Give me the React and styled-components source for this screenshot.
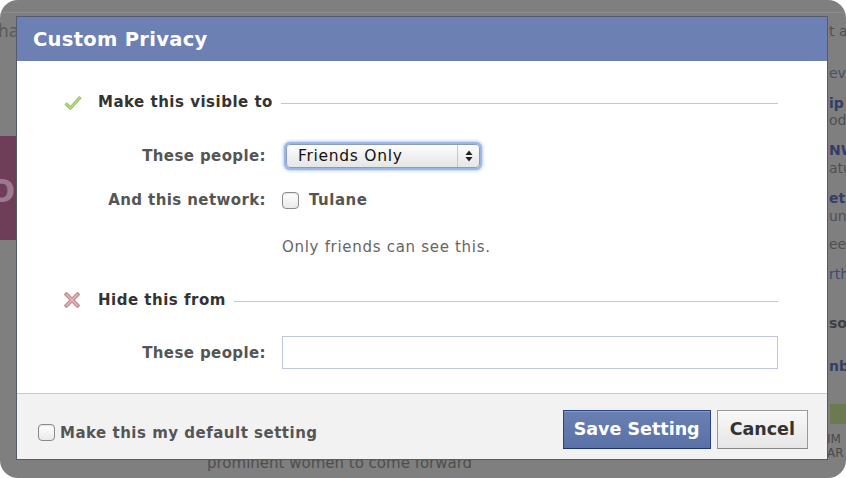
import React from "react";
import styled, { createGlobalStyle } from "styled-components";

const Global = createGlobalStyle`
  html, body { margin: 0; padding: 0; background: #ffffff; }
  body { font-family: "DejaVu Sans", "Liberation Sans", sans-serif; }
  * { box-sizing: border-box; }
`;

const Frame = styled.div`
  position: relative;
  width: 846px;
  height: 478px;
  border-radius: 18px;
  background: #7f7f7f;
  overflow: hidden;
  padding: 16px 18px 18px 16px;
  display: flex;
`;

const Backdrop = styled.div`
  position: absolute;
  inset: 0;
  pointer-events: none;
`;

const BgLine = styled.div`
  position: absolute;
  left: 0;
  right: 0;
  top: ${(p) => p.$top}px;
  height: 1px;
  background: #8c8c8c;
`;

const BgBox = styled.div`
  position: absolute;
  left: ${(p) => p.$left}px;
  top: ${(p) => p.$top}px;
  width: ${(p) => p.$w}px;
  height: ${(p) => p.$h}px;
  background: ${(p) => p.$bg};
`;

const BgText = styled.div`
  position: absolute;
  left: ${(p) => p.$left}px;
  top: ${(p) => p.$top}px;
  font-size: ${(p) => p.$size || 15}px;
  font-weight: ${(p) => (p.$bold ? 700 : 400)};
  color: ${(p) => p.$color || "#5c5c5c"};
  white-space: nowrap;
  line-height: 1;
`;

const Dialog = styled.div`
  position: relative;
  flex: 1;
  display: flex;
  flex-direction: column;
  border: 1px solid #555b6e;
  background: #ffffff;
`;

const TitleBar = styled.div`
  height: 44px;
  background: #6d80b4;
  color: #ffffff;
  font-size: 19.5px;
  font-weight: 700;
  padding: 0 16px;
  display: flex;
  align-items: center;
  letter-spacing: 0.3px;
`;

const Body = styled.div`
  flex: 1;
  padding: 26px 49px 0 47px;
  display: flex;
  flex-direction: column;
`;

const SectionHead = styled.div`
  display: flex;
  align-items: center;
  height: 30px;
  margin-top: ${(p) => p.$mt || 0}px;
`;

const IconSlot = styled.span`
  width: 34px;
  display: flex;
  align-items: center;
`;

const HeadText = styled.span`
  font-size: 15px;
  letter-spacing: 0.5px;
  font-weight: 700;
  color: #333333;
  white-space: nowrap;
  margin-right: 8px;
`;

const Rule = styled.span`
  flex: 1;
  height: 1px;
  background: #c6c6cc;
  margin-top: 2px;
`;

const FormRow = styled.div`
  display: flex;
  align-items: center;
  margin-top: ${(p) => p.$mt || 0}px;
  height: ${(p) => p.$h || 30}px;
`;

const Label = styled.span`
  width: 218px;
  text-align: right;
  font-size: 15px;
  letter-spacing: 0.4px;
  font-weight: 700;
  color: #555555;
  padding-right: 16px;
  white-space: nowrap;
`;

const Select = styled.div`
  width: 194px;
  height: 24px;
  margin-left: 4px;
  border: 1px solid #8a9bc0;
  border-radius: 4px;
  background: linear-gradient(#ffffff, #f0f0f0 50%, #e6e6e6);
  box-shadow: 0 0 0 2px #9ab8e6, 0 0 3px 3px rgba(120, 160, 220, 0.5);
  display: flex;
  align-items: center;
  font-size: 15.5px;
  letter-spacing: 0.7px;
  color: #111111;
`;

const SelectText = styled.span`
  flex: 1;
  padding-left: 11px;
`;

const SelectArrows = styled.span`
  width: 22px;
  height: 100%;
  border-left: 1px solid #c8c8c8;
  display: flex;
  align-items: center;
  justify-content: center;
`;

const Check = styled.span`
  width: 17px;
  height: 17px;
  border: 1px solid #8a8a8a;
  border-radius: 4px;
  background: linear-gradient(#ffffff, #e9e9e9);
  box-shadow: inset 0 1px 1px rgba(0, 0, 0, 0.1);
  flex: none;
`;

const CheckLabel = styled.span`
  font-size: 15px;
  letter-spacing: 0.5px;
  font-weight: 700;
  color: ${(p) => p.$color || "#555555"};
  margin-left: ${(p) => p.$ml || 10}px;
  white-space: nowrap;
`;

const Note = styled.div`
  margin-left: 218px;
  margin-top: 22px;
  font-size: 15px;
  letter-spacing: 0.7px;
  color: #666666;
  height: 20px;
  display: flex;
  align-items: center;
`;

const TextInput = styled.div`
  flex: 1;
  height: 33px;
  border: 1px solid #bdc7d8;
  background: #ffffff;
`;

const Footer = styled.div`
  height: 66px;
  background: #f2f2f2;
  border-top: 1px solid #c9c9c9;
  display: flex;
  align-items: center;
  padding: 5px 19px 0 21px;
`;

const FooterLeft = styled.label`
  flex: 1;
  display: flex;
  align-items: center;
  padding-top: 7px;
`;

const Button = styled.button`
  height: 39px;
  padding: 0 ${(p) => p.$px}px;
  margin-left: ${(p) => p.$ml || 0}px;
  font-family: inherit;
  font-size: 17.5px;
  font-weight: 700;
  cursor: pointer;
  color: ${(p) => (p.$primary ? "#ffffff" : "#333333")};
  background: ${(p) =>
    p.$primary ? "linear-gradient(#6a80b3, #5a71a6)" : "linear-gradient(#f8f8f8, #e6e6e6)"};
  border: 1px solid ${(p) => (p.$primary ? "#29447e" : "#999999")};
  border-bottom-color: ${(p) => (p.$primary ? "#1a356e" : "#888888")};
  box-shadow: ${(p) => (p.$primary ? "inset 0 1px 0 #8a9cc2" : "inset 0 1px 0 #ffffff")};
  border-radius: 0;
`;

const CheckIcon = () => (
  <svg width="18" height="15" viewBox="0 0 18 15">
    <path d="M1.5 8.5 L6.5 13 L16.5 2" fill="none" stroke="#8fbf5a" strokeWidth="3.2" strokeLinejoin="round" />
    <path d="M1.5 8.5 L6.5 13 L16.5 2" fill="none" stroke="#b8dd86" strokeWidth="1.2" strokeLinejoin="round" />
  </svg>
);

const XIcon = () => (
  <svg width="16" height="16" viewBox="0 0 16 16">
    <path d="M2.5 2.5 L13.5 13.5 M13.5 2.5 L2.5 13.5" stroke="#c58a8f" strokeWidth="4" strokeLinecap="square" />
    <path d="M2.5 2.5 L13.5 13.5 M13.5 2.5 L2.5 13.5" stroke="#e3bcbf" strokeWidth="1.4" strokeLinecap="square" />
  </svg>
);

const UpDown = () => (
  <svg width="8" height="12" viewBox="0 0 8 12">
    <path d="M4 0.5 L7.5 5 L0.5 5 Z" fill="#222" />
    <path d="M4 11.5 L7.5 7 L0.5 7 Z" fill="#222" />
  </svg>
);

const rightBits = [
  { t: 24, s: "t a", c: "#4f4f4f" },
  { t: 66, s: "ev", c: "#4a4f66" },
  { t: 96, s: "ip", c: "#333e66", b: true },
  { t: 113, s: "od", c: "#4f4f4f" },
  { t: 143, s: "NW", c: "#333e66", b: true },
  { t: 161, s: "atu", c: "#4f4f4f" },
  { t: 191, s: "et", c: "#333e66", b: true },
  { t: 209, s: "unc", c: "#4f4f4f" },
  { t: 237, s: "ee", c: "#4f4f4f" },
  { t: 267, s: "rth", c: "#3f4a70" },
  { t: 316, s: "so", c: "#3f3f3f", b: true },
  { t: 359, s: "nb", c: "#333e66", b: true },
];

export default function App() {
  return (
    <>
      <Global />
      <Frame>
        <Backdrop>
          <BgLine $top={12} />
          <BgText $left={-2} $top={23} $size={17} $color="#5a5a5a">ha</BgText>
          <BgBox $left={0} $top={136} $w={16} $h={104} $bg="#6e3e58" />
          <BgText $left={-12} $top={175} $size={32} $color="#9a7a8c" $bold>O</BgText>
          {rightBits.map((r, i) => (
            <BgText key={i} $left={829} $top={r.t} $size={14} $color={r.c} $bold={r.b}>
              {r.s}
            </BgText>
          ))}
          <BgBox $left={830} $top={404} $w={16} $h={20} $bg="#6b7a50" />
          <BgText $left={827} $top={433} $size={12} $color="#4a4a4a">IM</BgText>
          <BgText $left={827} $top={447} $size={12} $color="#4a4a4a">AR</BgText>
          <BgText $left={207} $top={456} $size={15} $color="#4e4e4e">prominent women to come forward</BgText>
        </Backdrop>
        <Dialog>
          <TitleBar>Custom Privacy</TitleBar>
          <Body>
            <SectionHead>
              <IconSlot><CheckIcon /></IconSlot>
              <HeadText>Make this visible to</HeadText>
              <Rule />
            </SectionHead>
            <FormRow $mt={24}>
              <Label>These people:</Label>
              <Select>
                <SelectText>Friends Only</SelectText>
                <SelectArrows><UpDown /></SelectArrows>
              </Select>
            </FormRow>
            <FormRow $mt={14}>
              <Label>And this network:</Label>
              <Check />
              <CheckLabel>Tulane</CheckLabel>
            </FormRow>
            <Note>Only friends can see this.</Note>
            <SectionHead $mt={28}>
              <IconSlot><XIcon /></IconSlot>
              <HeadText>Hide this from</HeadText>
              <Rule />
            </SectionHead>
            <FormRow $mt={21} $h={33}>
              <Label>These people:</Label>
              <TextInput />
            </FormRow>
          </Body>
          <Footer>
            <FooterLeft>
              <Check />
              <CheckLabel $ml={5}>Make this my default setting</CheckLabel>
            </FooterLeft>
            <Button $primary $px={10}>Save Setting</Button>
            <Button $px={12} $ml={6}>Cancel</Button>
          </Footer>
        </Dialog>
      </Frame>
    </>
  );
}
